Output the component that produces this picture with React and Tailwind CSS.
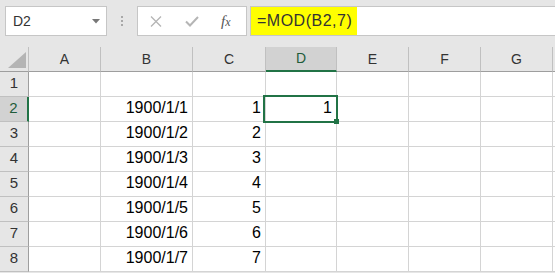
import React from "react";

const cols = ["A", "B", "C", "D", "E", "F", "G", ""];
const rows = [1, 2, 3, 4, 5, 6, 7, 8];

const Cell = ({ children, className = "" }) => (
  <div
    className={`h-[25px] border-r border-b border-[#d4d4d4] bg-white flex items-center justify-end pr-[4px] pb-[2px] text-[16px] text-black ${className}`}
  >
    {children}
  </div>
);

export default function App() {
  return (
    <div className="w-[555px] h-[273px] overflow-hidden bg-[#e6e6e6] font-['Liberation_Sans',sans-serif]">
      {/* Toolbar */}
      <div className="flex items-start h-[47px] pt-[6px]">
        <div className="ml-[5px] w-[102px] h-[30px] border border-[#c6c6c6] bg-white flex items-center justify-between pl-[7px] pr-[6px]">
          <span className="text-[14px] text-[#333]">D2</span>
          <svg width="8" height="5" viewBox="0 0 8 5">
            <path d="M0 0h8L4 4.5z" fill="#777" />
          </svg>
        </div>
        <div className="w-[30px] h-[30px] flex flex-col items-center justify-center gap-[2px]">
          <span className="w-[2px] h-[2px] bg-[#a8a8a8]" />
          <span className="w-[2px] h-[2px] bg-[#a8a8a8]" />
          <span className="w-[2px] h-[2px] bg-[#a8a8a8]" />
        </div>
        <div className="w-[110px] h-[30px] border border-[#c6c6c6] bg-white flex items-center">
          <svg className="ml-[12px]" width="12" height="11" viewBox="0 0 12 11">
            <path d="M1 0.5l10 10M11 0.5l-10 10" stroke="#b5b5b5" strokeWidth="1.3" />
          </svg>
          <svg className="ml-[23px]" width="14" height="11" viewBox="0 0 14 11">
            <path d="M1 5.5l4 4L13 1" stroke="#b5b5b5" strokeWidth="2" fill="none" />
          </svg>
          <span className="ml-[22px] font-['Liberation_Serif',serif] italic text-[15px] text-[#555] leading-none">
            f<span className="text-[12px]">x</span>
          </span>
        </div>
        <div className="ml-[3px] flex-1 h-[30px] border-t border-b border-l border-[#c6c6c6] bg-white flex">
          <div className="bg-[#ffff00] h-full flex items-center pl-[6px] pr-[4px] w-[106px]">
            <span className="text-[16px] tracking-[0.5px] text-[#333]">=MOD(B2,7)</span>
          </div>
        </div>
      </div>

      {/* Grid */}
      <div className="grid grid-cols-[29px_72px_92px_73px_71px_72px_72px_72px_1fr]">
        <div className="h-[25px] border-r border-b border-r-[#c0c0c0] border-b-[#9e9e9e] flex items-end justify-end pr-[2px] pb-[3px]">
          <svg width="18" height="16" viewBox="0 0 18 16">
            <path d="M18 0V16H0z" fill="#b4b4b4" />
          </svg>
        </div>
        {cols.map((c) =>
          c === "D" ? (
            <div
              key={c}
              className="h-[25px] border-r border-b-2 border-r-[#c0c0c0] border-b-[#217346] bg-[#d2d2d2] flex items-center justify-center text-[14px] text-[#1f5c3a]"
            >
              {c}
            </div>
          ) : (
            <div
              key={c || "h"}
              className="h-[25px] border-r border-b border-r-[#c0c0c0] border-b-[#9e9e9e] flex items-center justify-center text-[14px] text-[#333]"
            >
              {c}
            </div>
          )
        )}

        {rows.map((r) => (
          <React.Fragment key={r}>
            <div
              className={`h-[25px] border-b border-b-[#c0c0c0] flex items-center justify-center pb-[1px] text-[15px] ${
                r === 2
                  ? "border-r-2 border-r-[#217346] bg-[#d2d2d2] text-[#1f5c3a]"
                  : "border-r border-r-[#9e9e9e] text-[#333]"
              }`}
            >
              {r}
            </div>
            <Cell />
            <Cell>{r > 1 ? `1900/1/${r - 1}` : ""}</Cell>
            <Cell>{r > 1 ? r - 1 : ""}</Cell>
            {r === 2 ? (
              <Cell className="relative">
                1
                <div className="absolute left-[-3px] top-[-2px] w-[75px] h-[28px] border-2 border-[#217346] z-10" />
                <div className="absolute left-[68px] top-[22px] w-[5px] h-[5px] bg-[#217346] z-20" />
              </Cell>
            ) : (
              <Cell />
            )}
            <Cell />
            <Cell />
            <Cell />
            <Cell />
          </React.Fragment>
        ))}
      </div>
    </div>
  );
}
